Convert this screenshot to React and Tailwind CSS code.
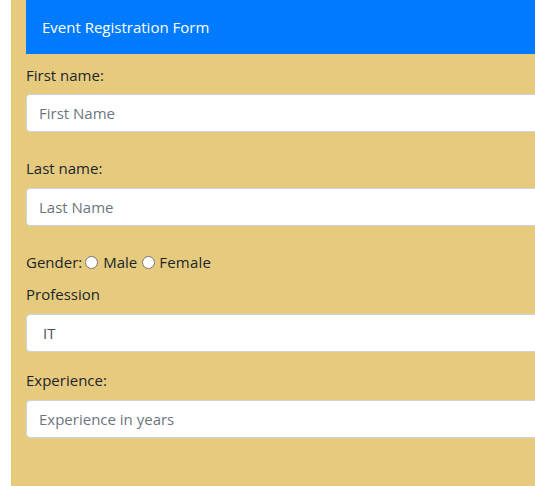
import React from "react";

const font = { fontFamily: '"Open Sans", "Noto Sans", sans-serif' };

export default function App() {
  return (
    <div className="w-[535px] h-[486px] overflow-hidden bg-white pl-[11px]" style={font}>
      <div className="h-full w-[600px] bg-[#e6cb7f] pl-[15px] text-[15px] leading-[24px] text-[#212529]">
        <div className="h-[54px] bg-[#007bff] pl-[16px] flex items-center text-white">
          Event Registration Form
        </div>
        <label className="block mt-[9px] mb-[7px]">First name:</label>
        <input
          className="block w-full h-[38px] rounded-[4px] border border-[#ced4da] bg-white px-[12px] placeholder:text-[#6c757d] outline-none"
          placeholder="First Name"
        />
        <label className="block mt-[24px] mb-[8px]">Last name:</label>
        <input
          className="block w-full h-[38px] rounded-[4px] border border-[#ced4da] bg-white px-[12px] placeholder:text-[#6c757d] outline-none"
          placeholder="Last Name"
        />
        <div className="mt-[24px] flex items-center">
          <span>Gender:</span>
          <span className="inline-block w-[13px] h-[13px] rounded-full border border-[#767676] bg-white ml-[3px] mr-[5px]"></span>
          <span>Male</span>
          <span className="inline-block w-[13px] h-[13px] rounded-full border border-[#767676] bg-white ml-[5px] mr-[4px]"></span>
          <span className="tracking-[0.2px]">Female</span>
        </div>
        <label className="block mt-[8px] mb-[8px]">Profession</label>
        <div className="w-full h-[38px] rounded-[4px] border border-[#ced4da] bg-white pl-[16px] flex items-center text-[#495057]">
          IT
        </div>
        <label className="block mt-[16px] mb-[8px]">Experience:</label>
        <input
          className="block w-full h-[38px] rounded-[4px] border border-[#ced4da] bg-white px-[12px] placeholder:text-[#6c757d] outline-none"
          placeholder="Experience in years"
        />
      </div>
    </div>
  );
}
